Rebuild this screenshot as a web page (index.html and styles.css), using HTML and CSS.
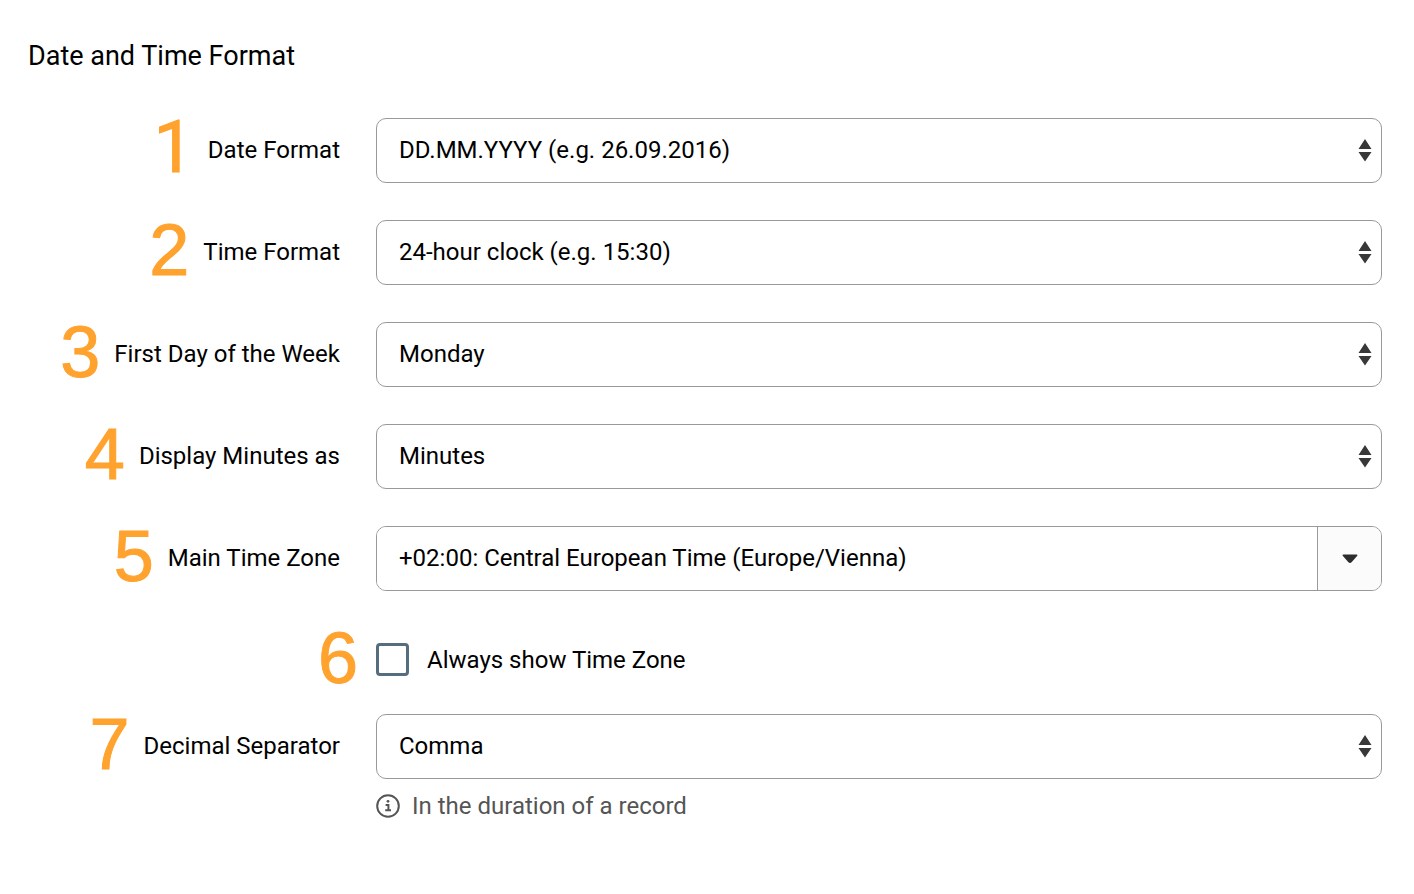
FILE: index.html
```html
<!DOCTYPE html>
<html lang="en">
  <head>
    <meta charset="UTF-8" />
    <meta name="viewport" content="width=device-width, initial-scale=1.0" />
    <title>Date and Time Format</title>
    <link rel="stylesheet" href="styles.css">
  </head>
  <body>
    <main class="settings">
      <h1>Date and Time Format</h1>

      <form class="settings-form">
        <div class="form-row">
          <div class="form-label">
            <span class="step step-one">1</span>
            <label for="dateFormat">Date Format</label>
          </div>
          <select id="dateFormat" name="dateFormat" class="control">
            <option>DD.MM.YYYY (e.g. 26.09.2016)</option>
          </select>
        </div>

        <div class="form-row">
          <div class="form-label">
            <span class="step">2</span>
            <label for="timeFormat">Time Format</label>
          </div>
          <select id="timeFormat" name="timeFormat" class="control">
            <option>24-hour clock (e.g. 15:30)</option>
          </select>
        </div>

        <div class="form-row">
          <div class="form-label">
            <span class="step">3</span>
            <label for="firstDay">First Day of the Week</label>
          </div>
          <select id="firstDay" name="firstDay" class="control">
            <option>Monday</option>
          </select>
        </div>

        <div class="form-row">
          <div class="form-label">
            <span class="step">4</span>
            <label for="displayMinutes">Display Minutes as</label>
          </div>
          <select id="displayMinutes" name="displayMinutes" class="control">
            <option>Minutes</option>
          </select>
        </div>

        <div class="form-row">
          <div class="form-label">
            <span class="step">5</span>
            <label for="timeZone">Main Time Zone</label>
          </div>
          <div class="control combobox">
            <input
              type="text"
              id="timeZone"
              name="timeZone"
              value="+02:00: Central European Time (Europe/Vienna)"
            />
            <button type="button" aria-label="Show time zones">
              <svg width="16" height="10" viewBox="0 0 16 10">
                <path d="M1.300 1.300h13.400L9 7.800q-1 1-2 0z" fill="#2d2d2d" stroke="#2d2d2d" stroke-width="1.500" stroke-linejoin="round" />
              </svg>
            </button>
          </div>
        </div>

        <div class="form-row checkbox-row">
          <div class="form-label">
            <span class="step">6</span>
          </div>
          <div class="checkbox">
            <input type="checkbox" id="showZone" name="showZone" />
            <label for="showZone">Always show Time Zone</label>
          </div>
        </div>

        <div class="form-row">
          <div class="form-label">
            <span class="step">7</span>
            <label for="separator">Decimal Separator</label>
          </div>
          <select id="separator" name="separator" class="control" aria-describedby="separatorHint">
            <option>Comma</option>
          </select>
          <p class="hint" id="separatorHint">
            <svg width="24" height="24" viewBox="0 0 24 24" fill="none" stroke="#555" stroke-width="2">
              <circle cx="12" cy="12" r="10.8" />
              <path d="M9.600 11h2.800v5.400M9.200 16.200h5.800" />
              <circle cx="12" cy="7.300" r="1.400" fill="#555" stroke="none" />
            </svg>
            In the duration of a record
          </p>
        </div>
      </form>
    </main>
  </body>
</html>
```

FILE: styles.css
```css
* {
  box-sizing: border-box;
}

body {
  margin: 0;
  background: #fff;
  color: #000;
  font-family: Roboto, Arial, sans-serif;
  font-size: 24px;
}

.settings {
  padding: 36px 32px 36px 28px;
}

h1 {
  margin: 0 0 42px;
  font-size: 27px;
  font-weight: 400;
  line-height: 40px;
}

.form-row {
  display: grid;
  grid-template-columns: 312px 1fr;
  column-gap: 36px;
  margin-bottom: 37px;
}

.form-label {
  display: flex;
  align-items: center;
  justify-content: flex-end;
  gap: 14px;
  height: 65px;
  padding-bottom: 2px;
  white-space: nowrap;
}

/* orange step numbers in front of the labels */
.step {
  padding-bottom: 4px;
  color: #ffa22e;
  font-family: "Liberation Sans", Arial, sans-serif;
  font-size: 72px;
  line-height: 64px;
  -webkit-text-stroke: 1px #ffa22e;
}

.step-one {
  font-family: Roboto, sans-serif;
}

.control {
  width: 100%;
  height: 65px;
  border: 1px solid #999;
  border-radius: 10px;
  background-color: #fff;
  color: #000;
  font: inherit;
}

select.control {
  appearance: none;
  padding: 0 40px 2px 22px;
  background-image: url("data:image/svg+xml,%3csvg xmlns='http://www.w3.org/2000/svg' width='14' height='24' viewBox='0 0 14 24'%3e%3cpath d='M7 0l6.500 10H.5zM.5 13h13L7 22.500z' fill='%23383838'/%3e%3c/svg%3e");
  background-position: right 9px center;
  background-repeat: no-repeat;
}

.combobox {
  display: flex;
  overflow: hidden;
}

.combobox input {
  flex: 1;
  min-width: 0;
  padding: 0 22px 2px;
  border: none;
  color: inherit;
  font: inherit;
}

.combobox button {
  display: flex;
  align-items: center;
  justify-content: center;
  width: 64px;
  padding: 0;
  border: none;
  border-left: 1px solid #999;
  background: #fbfbfb;
}

.checkbox-row {
  margin-bottom: 21px;
}

.checkbox-row .step {
  margin-right: -18px;
}

.checkbox {
  display: flex;
  align-items: center;
  gap: 18px;
  padding-bottom: 2px;
}

.checkbox input {
  appearance: none;
  width: 33px;
  height: 33px;
  margin: 0;
  border: 3px solid #546e7f;
  border-radius: 4px;
}

.checkbox input:checked {
  background: #546e7f;
}

.hint {
  grid-column: 2;
  display: flex;
  align-items: center;
  gap: 12px;
  margin: 12px 0 0;
  color: #555;
  line-height: 30px;
}
```
